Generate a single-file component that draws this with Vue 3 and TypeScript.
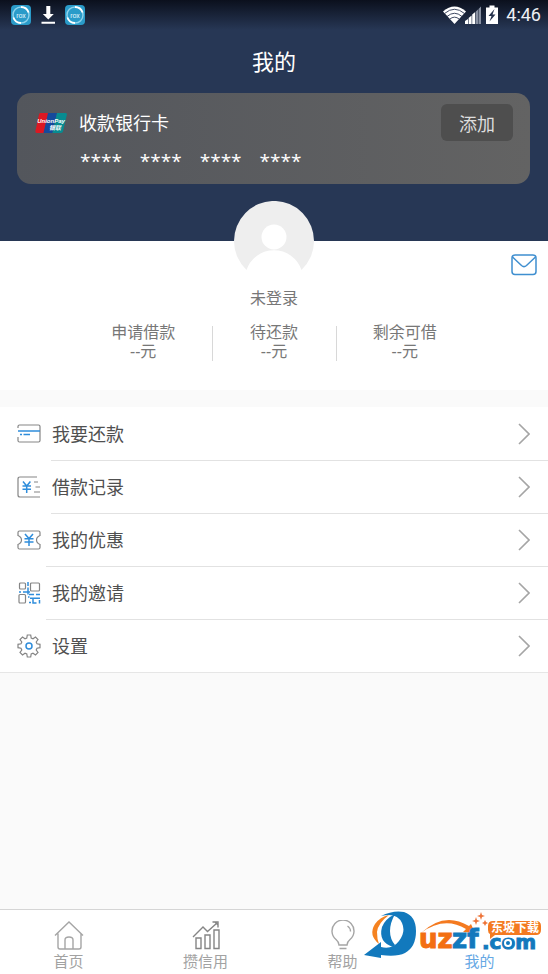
<script setup lang="ts">
type IconName = 'card' | 'record' | 'coupon' | 'invite' | 'settings'

interface MenuItem {
  label: string
  icon: IconName
  wideLine: boolean
}

interface Stat {
  label: string
  value: string
}

const stats: Stat[] = [
  { label: '申请借款', value: '--元' },
  { label: '待还款', value: '--元' },
  { label: '剩余可借', value: '--元' },
]

const menu: MenuItem[] = [
  { label: '我要还款', icon: 'card', wideLine: false },
  { label: '借款记录', icon: 'record', wideLine: false },
  { label: '我的优惠', icon: 'coupon', wideLine: true },
  { label: '我的邀请', icon: 'invite', wideLine: true },
  { label: '设置', icon: 'settings', wideLine: true },
]

const tabs = [
  { label: '首页', icon: 'home' },
  { label: '攒信用', icon: 'chart' },
  { label: '帮助', icon: 'bulb' },
  { label: '我的', icon: 'none' },
]
const activeTab = '我的'
</script>

<template>
  <div class="page">
    <header class="hero">
      <div class="status">
        <div class="status-left">
          <svg class="app-icon" viewBox="0 0 20 20">
            <rect width="20" height="20" rx="4" fill="#2a9bc9" />
            <circle cx="10" cy="10" r="8" fill="none" stroke="#8fd3ec" stroke-width="1.4" />
            <path d="M10 2a8 8 0 0 1 7.600 5.500M10 18a8 8 0 0 1-7.600-5.500" fill="none" stroke="#fff" stroke-width="1.8" />
            <text x="10" y="12.500" text-anchor="middle" font-size="7" fill="#e4f6fd">rox</text>
          </svg>
          <svg class="app-icon" viewBox="0 0 20 20">
            <path d="M8.300 1h4v8h3.500l-5.500 5.500L4.800 9h3.500zM3.500 16.800h13.500v2H3.500z" fill="#fff" />
          </svg>
          <svg class="app-icon" viewBox="0 0 20 20">
            <rect width="20" height="20" rx="4" fill="#2a9bc9" />
            <circle cx="10" cy="10" r="8" fill="none" stroke="#8fd3ec" stroke-width="1.4" />
            <path d="M10 2a8 8 0 0 1 7.600 5.500M10 18a8 8 0 0 1-7.600-5.500" fill="none" stroke="#fff" stroke-width="1.8" />
            <text x="10" y="12.500" text-anchor="middle" font-size="7" fill="#e4f6fd">rox</text>
          </svg>
        </div>
        <div class="status-right">
          <svg class="signals" viewBox="0 0 56 20">
            <path d="M0 6.500Q11.500-3.500 23 6.500L11.500 19z" fill="#fff" />
            <g fill="none" stroke="#2a3650" stroke-width="0.900">
              <path d="M1.500 8.500Q11.500 0 21.500 8.500" />
              <path d="M4 11.500Q11.500 5 19 11.500" />
              <path d="M6.500 14.300Q11.500 10 16.500 14.300" />
            </g>
            <path d="M22 19v-3l3-2v5zM25.600 19v-6l3-2.500V19zM29.200 19V9.500L32.200 7v12z" fill="#fff" />
            <path d="M32.800 19V6.500l2.200-2V19zM35.500 19V4L38 1.500V19z" fill="#8991a2" />
            <path d="M43 2.500h3.500V.500h5v2H55V19H43z" fill="#fff" />
            <path d="M51.500 4l-6 7h3l-2 5.500 6-7h-3z" fill="#26324d" />
          </svg>
          <span class="clock">4:46</span>
        </div>
      </div>

      <h1 class="title">我的</h1>

      <section class="bank-card">
        <div class="bank-row">
          <svg class="union" viewBox="0 0 32 20">
            <path d="M5 0h11l-4.500 20H2Q0 20 .400 18L4 1.500Q4.300 0 5 0z" fill="#dc1822" />
            <path d="M13 0h9l-4.500 20H8.500z" fill="#154a9c" />
            <path d="M22 0h8.500q1.700 0 1.300 2L28 18.300Q27.600 20 26 20H17.500z" fill="#078c91" />
            <text x="16" y="10" text-anchor="middle" class="union-latin">UnionPay</text>
            <text x="20" y="17" text-anchor="middle" class="union-han">银联</text>
          </svg>
          <span class="bank-name">收款银行卡</span>
          <button class="add" type="button">添加</button>
        </div>
        <div class="digits">
          <span v-for="n in 4" :key="n">****</span>
        </div>
      </section>
    </header>

    <section class="profile">
      <svg class="avatar" viewBox="0 0 80 80">
        <path d="M12.500 69A40 40 0 1 1 67.500 69A29 29 0 0 0 12.500 69z" fill="#eee" />
        <circle cx="40" cy="36" r="12.500" fill="#fff" />
      </svg>
      <button class="mail" type="button" aria-label="消息">
        <svg viewBox="0 0 26 22">
          <rect x="1" y="1" width="24" height="19.500" rx="3" />
          <path d="M1.500 3l9 8.500q2.500 2.200 5 0l9-8.500" />
        </svg>
      </button>
      <p class="user">未登录</p>
      <dl class="stats">
        <div v-for="s in stats" :key="s.label" class="stat">
          <dt>{{ s.label }}</dt>
          <dd>{{ s.value }}</dd>
        </div>
      </dl>
    </section>

    <nav class="menu">
      <a v-for="item in menu" :key="item.label" href="#" class="row" :class="{ wide: item.wideLine }">
        <svg class="row-icon" viewBox="0 0 24 24">
          <g v-if="item.icon === 'card'">
            <path d="M1 6V4.500Q1 3 2.500 3h19Q23 3 23 4.500v14q0 1.500-1.500 1.500h-19Q1 20 1 18.500V15" />
            <path class="blue" d="M1 9h22M3 12.500h2M6.500 12.500H13" />
          </g>
          <g v-else-if="item.icon === 'record'">
            <path d="M20 2H3Q1 2 1 4v16q0 2 2 2h20M17 7h4M18.500 12H23M17 17h6" />
            <path class="blue" d="M6 6.500l3.700 4.500 3.700-4.500M5.500 11h8.500M5.500 14.200h8.500M9.700 11v7" />
          </g>
          <g v-else-if="item.icon === 'coupon'">
            <path d="M2.500 3h19Q23 3 23 4.500v3q-3.500 1.500-3.500 4.500t3.500 4.500v3q0 1.500-1.500 1.500h-19Q1 21 1 19.500v-3q3.500-1.500 3.500-4.500T1 7.500v-3Q1 3 2.500 3z" />
            <path class="blue" d="M8 6l4 4.500L16 6M7.500 10.700h9M7.500 14h9M12 10.500V18" />
          </g>
          <g v-else-if="item.icon === 'invite'">
            <rect x="2.500" y="2" width="6" height="6" rx="1" />
            <rect x="13.500" y="2" width="9" height="8" rx="1" />
            <rect x="2" y="13.500" width="6.500" height="8.500" rx="1" />
            <path class="blue" d="M11 1v4M11 6.500v7M2 11h2M6 11h7M11 16h1.500M12 13.500h5M19 13.500h4M13 17.200h10M12 21.500h2M16 17v5h3.500M22.500 19v3.500" />
          </g>
          <g v-else>
            <path
              d="M9.800 4L10.300 1h3.400l.5 3 1.800.8 2.500-1.800 2.500 2.500L19.200 8l.8 1.800 3 .5v3.400l-3 .5-.8 1.800 1.800 2.500-2.500 2.500-2.500-1.800-1.800.8-.5 3h-3.400l-.5-3-1.800-.8L5.500 21 3 18.500 4.800 16 4 14.200l-3-.5v-3.400l3-.5L4.800 8 3 5.500 5.500 3 8 4.800z" />
            <circle class="blue" cx="12" cy="12" r="3" />
          </g>
        </svg>
        <span class="row-label">{{ item.label }}</span>
        <svg class="chevron" viewBox="0 0 12 22"><path d="M1 1l10 10L1 21" /></svg>
      </a>
    </nav>

    <footer class="tabbar">
      <nav class="tabs">
        <a v-for="t in tabs" :key="t.label" href="#" class="tab" :class="{ active: t.label === activeTab }">
          <svg class="tab-icon" viewBox="0 0 30 30">
            <g v-if="t.icon === 'home'">
              <path d="M1 15.500L15 2l14 13.500M4 13.500V27q0 2 2 2h19q2 0 2-2V13.500M11 29v-9q0-3 4-3t4 3v9" />
            </g>
            <g v-else-if="t.icon === 'chart'" class="dark">
              <path d="M2 17L12 7l4.500 4.500L26 3M21.500 2H27v5.500M24 2l3 3M5 18h5v10.500H5zM14 15h5v13.500h-5zM23 10h5v18.500h-5z" />
            </g>
            <g v-else-if="t.icon === 'bulb'">
              <path d="M11 25q0-3-3-5.500A11 11 0 1 1 22 19.500q-3 2.500-3 5.500zM11.500 28.500h7M19.500 6q3 2 3 5.500" />
            </g>
          </svg>
          <span>{{ t.label }}</span>
        </a>
      </nav>
      <svg class="brand" viewBox="0 0 180 52">
        <path d="M15 33Q4 24 11 13Q16 6 25 4Q14 12 13 21Q13 28 15 33z" fill="#f58220" />
        <path d="M29 36Q14 31 18 16Q21 8 31 3Q26 12 26 20Q26 28 31 34z" fill="#1279bd" />
        <path d="M17 5Q29-1 40 1Q52 5 52 20Q52 36 41 42Q33 46 17 44V47L0 44L17 31V36Q28 39 35 30Q42 21 38 12Q33 1 17 5z" fill="#1279bd" />
        <path d="M57 22Q80 0 105 15L107 13L111 22L99 21L102 18Q80 5 57 22z" fill="#f47a20" />
        <text x="55" y="37" class="brand-big" fill="#f36f12" stroke="#f36f12">uz</text>
        <text x="88" y="37" class="brand-big" fill="#1279bd" stroke="#1279bd">zf</text>
        <text x="118" y="38" class="brand-small" fill="#1279bd" stroke="#1279bd">.com</text>
        <path d="M111 9l1-3 1 3 3 1-3 1-1 3-1-3-3-1zM116 4l1-3 1 3 3 1-3 1-1 3-1-3-3-1zM120 11l1-2 1 2 2 1-2 1-1 2-1-2-2-1z" fill="#ee7438" />
        <path d="M129 10H172Q177 10 177 15V19Q177 24 172 24H131L126 28V23Q124 22 124 19V15Q124 10 129 10z" fill="#f47a20" />
        <text x="127" y="21" class="brand-han" fill="#fff">东坡下载</text>
        <circle cx="144" cy="32" r="4" fill="#fff" />
        <circle cx="144" cy="32" r="2" fill="#1279bd" />
      </svg>
    </footer>
  </div>
</template>

<style>
body {
  margin: 0;
  background: #fafafa;
}
</style>

<style scoped>
.page {
  display: flex;
  flex-direction: column;
  min-height: 100vh;
  font-family: "Noto Sans", "Noto Sans CJK SC", sans-serif;
  color: #555;
  background: #fafafa;
}

svg {
  display: block;
  flex: none;
}

a {
  color: inherit;
  text-decoration: none;
}

.hero {
  box-sizing: border-box;
  padding-bottom: 57px;
  background: linear-gradient(#0b101d, #273755 30px, #273755);
}

.status {
  display: flex;
  justify-content: space-between;
  align-items: center;
  height: 30px;
  padding: 0 7px 0 11px;
}

.status-left,
.status-right {
  display: flex;
  align-items: center;
  gap: 7px;
}

.app-icon {
  width: 20px;
  height: 20px;
  font-family: Roboto, sans-serif;
}

.signals {
  width: 56px;
  height: 20px;
}

.clock {
  font: 18px/30px Roboto, sans-serif;
  color: #eef0f4;
}

.title {
  margin: 0;
  font-size: 22px;
  font-weight: 400;
  line-height: 63px;
  text-align: center;
  color: #fff;
}

.bank-card {
  box-sizing: border-box;
  height: 91px;
  margin: 0 18px 0 17px;
  padding: 11px 17px 0 18px;
  border-radius: 14px;
  background: linear-gradient(90deg, #53565c, #636363);
  color: #fff;
}

.bank-row {
  display: flex;
  align-items: center;
}

.union {
  width: 32px;
  height: 20px;
  margin-right: 12px;
}

.union-latin {
  font: italic bold 6px "Liberation Sans", sans-serif;
  fill: #fff;
}

.union-han {
  font: italic bold 6px "Noto Sans CJK SC", sans-serif;
  fill: #fff;
}

.bank-name {
  flex: 1;
  font-size: 18px;
  line-height: 26px;
}

.add {
  width: 72px;
  height: 37px;
  padding: 0;
  border: 0;
  border-radius: 6px;
  background: #4e4e4e;
  color: #ddd;
  font: inherit;
  font-size: 18px;
}

.digits {
  display: flex;
  gap: 18px;
  padding-left: 45px;
  font-family: "Open Sans", sans-serif;
  font-size: 19px;
  font-weight: 500;
  line-height: 40px;
}

.profile {
  position: relative;
  box-sizing: border-box;
  height: 149px;
  padding-top: 48px;
  background: #fff;
  color: #777;
  font-size: 16px;
  line-height: 19px;
  text-align: center;
}

.avatar {
  position: absolute;
  top: -40px;
  left: 50%;
  width: 80px;
  height: 80px;
  margin-left: -40px;
}

.mail {
  position: absolute;
  top: 13px;
  right: 11px;
  padding: 0;
  border: 0;
  background: none;
}

.mail svg {
  width: 26px;
  height: 22px;
  fill: none;
  stroke: #3f8fd0;
  stroke-width: 1.5;
}

.user {
  margin: 0;
}

.stats {
  display: grid;
  grid-template-columns: 9fr 8fr 9fr;
  margin: 15px 74px 0;
}

.stat {
  position: relative;
}

.stat + .stat::before {
  content: "";
  position: absolute;
  top: 3px;
  bottom: 0;
  left: 0;
  border-left: 1px solid #d8d8d8;
}

.stat dd {
  margin: 0;
}

.menu {
  margin-top: 17px;
  background: #fff;
  border-bottom: 1px solid #e6e6e6;
}

.row {
  position: relative;
  display: flex;
  align-items: center;
  height: 53px;
  padding: 0 18px 0 17px;
}

.row:not(:last-child)::after {
  content: "";
  position: absolute;
  right: 0;
  bottom: -1px;
  left: 51px;
  border-bottom: 1px solid #e2e2e2;
}

.row.wide::after {
  left: 46px;
}

.row-icon {
  width: 24px;
  height: 24px;
  margin-right: 11px;
  fill: none;
  stroke: #858585;
  stroke-width: 1.2;
}

.row-icon .blue {
  stroke: #2f8ddb;
  stroke-width: 1.5;
}

.row-label {
  flex: 1;
  font-size: 18px;
  line-height: 26px;
  color: #505050;
}

.chevron {
  width: 12px;
  height: 22px;
  fill: none;
  stroke: #a5a5a5;
  stroke-width: 1.6;
}

.tabbar {
  position: relative;
  margin-top: auto;
  border-top: 1px solid #d5d5d5;
  background: #fff;
}

.tabs {
  display: grid;
  grid-template-columns: repeat(4, 1fr);
}

.tab {
  display: flex;
  flex-direction: column;
  align-items: center;
  height: 64px;
  padding-top: 10px;
  box-sizing: border-box;
  font-size: 15px;
  line-height: 22px;
  color: #a2a2a2;
}

.tab.active {
  color: #66a8e4;
}

.tab-icon {
  width: 30px;
  height: 30px;
  fill: none;
  stroke: #a5a5a5;
  stroke-width: 1.4;
}

.tab-icon .dark {
  stroke: #858585;
}

.brand {
  position: absolute;
  top: 1px;
  right: 4px;
  width: 180px;
  height: 52px;
  pointer-events: none;
}

.brand-big {
  font: bold 26px "DejaVu Sans", sans-serif;
  stroke-width: 1px;
}

.brand-small {
  font: bold 20px "DejaVu Sans", sans-serif;
  stroke-width: 1px;
}

.brand-han {
  font: bold 12px "Noto Sans CJK SC", sans-serif;
}
</style>
